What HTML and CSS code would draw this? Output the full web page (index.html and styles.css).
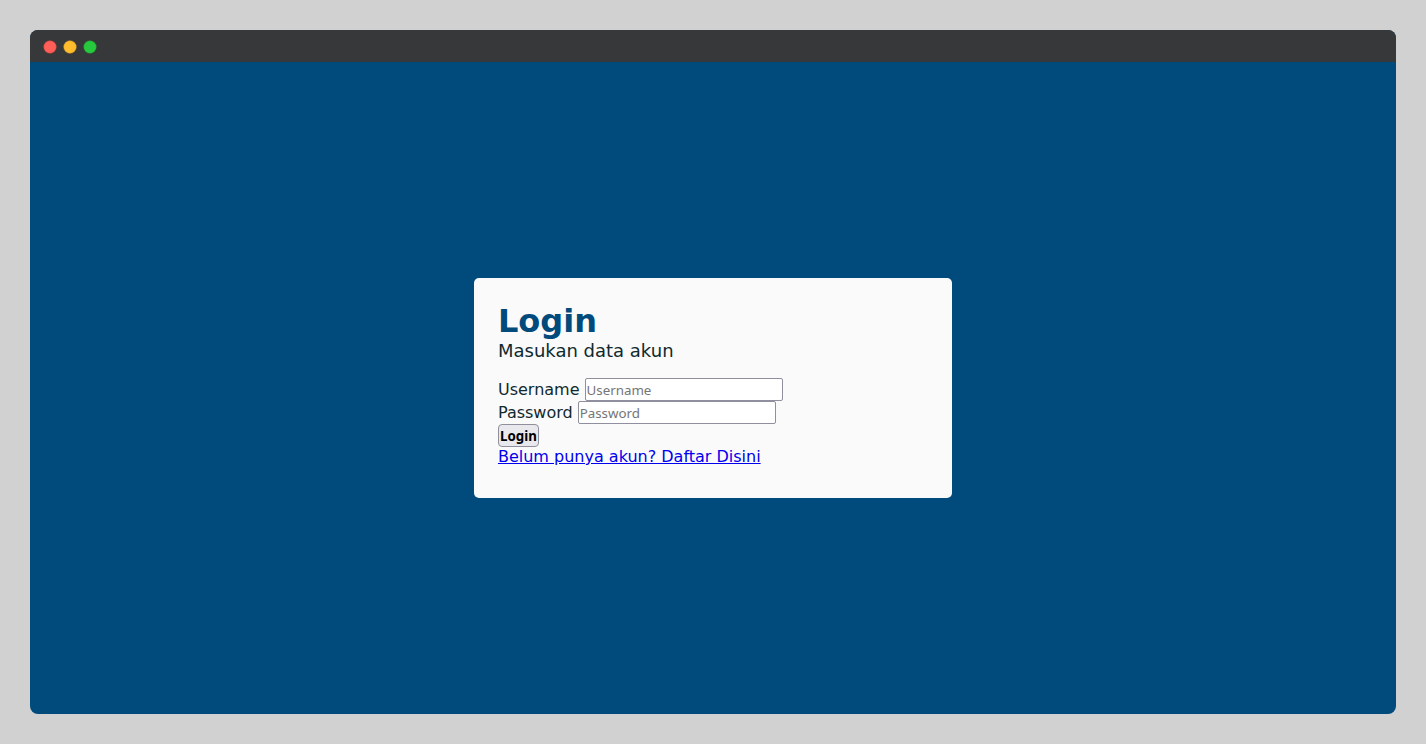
FILE: index.html
```html
<!DOCTYPE html>
<html lang="id">
<head>
<meta charset="utf-8">
<title>Login</title>
<link rel="stylesheet" href="styles.css">
</head>
<body>
<div class="window">
  <header class="titlebar">
    <svg class="dots" width="54" height="14" viewBox="0 0 54 14" aria-hidden="true">
      <circle class="dot-close" cx="7" cy="7" r="6.25"/>
      <circle class="dot-minimize" cx="27" cy="7" r="6.25"/>
      <circle class="dot-zoom" cx="47" cy="7" r="6.25"/>
    </svg>
  </header>
  <main class="page">
    <section class="card">
      <h1 class="title">Login</h1>
      <p class="subtitle">Masukan data akun</p>
      <form class="form">
        <div class="field">
          <label for="username">Username</label>
          <input class="input" id="username" type="text" placeholder="Username">
        </div>
        <div class="field">
          <label for="password">Password</label>
          <input class="input" id="password" type="password" placeholder="Password">
        </div>
        <button class="submit" type="submit">Login</button>
      </form>
      <a class="register" href="#">Belum punya akun? Daftar Disini</a>
    </section>
  </main>
</div>
</body>
</html>
```

FILE: styles.css
```css
* {
  box-sizing: border-box;
  margin: 0;
  padding: 0;
}

body {
  display: flex;
  min-height: 100vh;
  padding: 30px;
  background: #d1d1d1;
  color: #0f292f;
  font-family: "DejaVu Sans", sans-serif;
  font-size: 16px;
  line-height: 19px;
}

.window {
  display: flex;
  flex: 1;
  flex-direction: column;
  overflow: hidden;
  border-radius: 8px;
  background: #004a7c;
}

.titlebar {
  display: flex;
  align-items: center;
  height: 32px;
  padding: 2px 13px 0;
  background: #373839;
}

.dot-close {
  fill: #ff5f56;
  stroke: #e0443e;
  stroke-width: 0.5;
}

.dot-minimize {
  fill: #ffbd2e;
  stroke: #dea123;
  stroke-width: 0.5;
}

.dot-zoom {
  fill: #27c93f;
  stroke: #1aab29;
  stroke-width: 0.5;
}

.page {
  display: flex;
  flex: 1;
  align-items: center;
  justify-content: center;
}

.card {
  width: 35%;
  padding: 24px 24px 32px;
  border-radius: 5px;
  background: #fafafa;
}

.title {
  color: #004a7c;
  font-size: 32px;
  line-height: 38px;
}

.subtitle {
  margin-bottom: 16px;
  font-size: 18px;
  line-height: 22px;
}

.field {
  display: flex;
  align-items: center;
  gap: 5px;
}

.input {
  width: 198px;
  height: 23px;
  padding: 1px;
  border: 1px solid #8f8f9d;
  border-radius: 2px;
  background: #ffffff;
  font-family: "Noto Sans", sans-serif;
}

.input::placeholder {
  color: #757575;
}

.submit {
  display: block;
  height: 23px;
  padding: 0 1px;
  border: 1px solid #8f8f9d;
  border-radius: 4px;
  background: #e9e9ed;
  color: #000000;
  font-family: "Noto Sans", sans-serif;
  font-weight: bold;
}

.register {
  color: #0000ee;
}
```
